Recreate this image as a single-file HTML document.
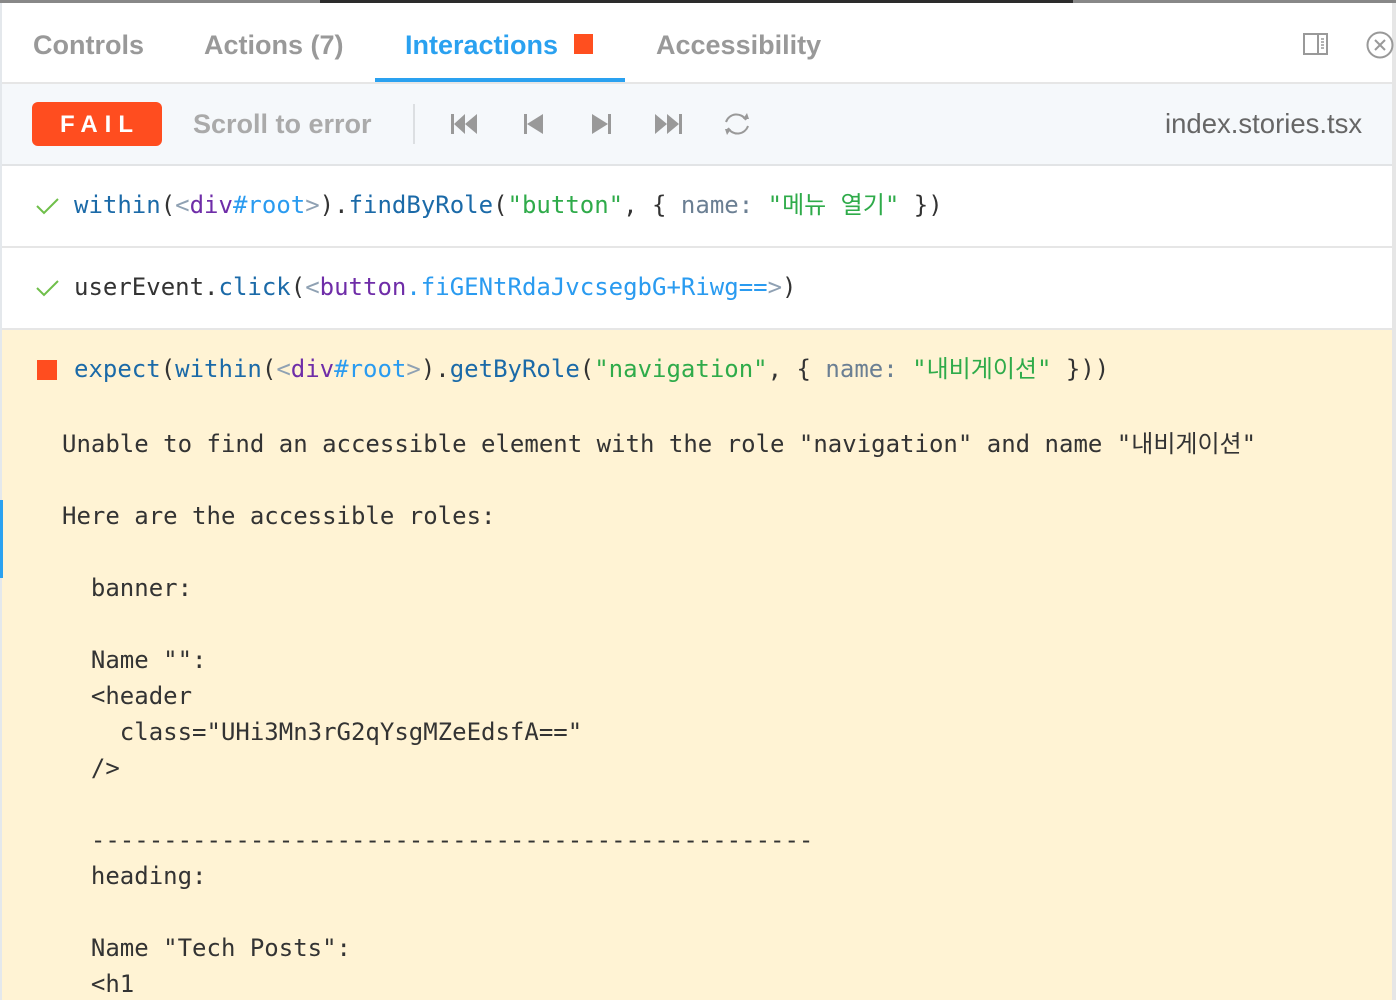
<!DOCTYPE html>
<html><head><meta charset="utf-8"><style>
*{margin:0;padding:0;box-sizing:border-box}
body{width:1396px;height:1000px;overflow:hidden;background:#fff;font-family:"Liberation Sans","Noto Sans CJK KR",sans-serif;position:relative}
.abs{position:absolute}
.mono{font-family:"DejaVu Sans Mono","Liberation Mono","Noto Sans CJK KR",monospace;font-size:24px;white-space:pre;color:#333}
.tab{position:absolute;top:28px;font-size:27px;font-weight:bold;color:#999;line-height:34px}
.b{color:#1b6aa8}.g{color:#8fa1b3}.p{color:#6f2da8}.l{color:#2a9bf0}.s{color:#2fab4a}.k{color:#6b7f93}
</style></head><body>
<div class="abs" style="left:0;top:0;width:320px;height:3px;background:#888"></div>
<div class="abs" style="left:320px;top:0;width:753px;height:3px;background:#2c2c2c"></div>
<div class="abs" style="left:1073px;top:0;width:323px;height:3px;background:#888"></div>
<div class="abs" style="left:0;top:3px;width:2px;height:997px;background:#e4e8ec"></div>
<div class="abs" style="left:1392px;top:3px;width:4px;height:997px;background:#e6e6e6"></div>

<div class="tab" style="left:33px">Controls</div>
<div class="tab" style="left:204px">Actions (7)</div>
<div class="tab" style="left:405px;color:#2aa1f0">Interactions</div>
<div class="abs" style="left:574px;top:34px;width:19px;height:20px;background:#ff4f1f"></div>
<div class="tab" style="left:656px">Accessibility</div>
<div class="abs" style="left:375px;top:78px;width:250px;height:5px;background:#2aa1f0"></div>
<svg class="abs" style="left:1303px;top:33px" width="26" height="22"><rect x="1" y="1" width="23" height="20" fill="none" stroke="#999" stroke-width="2"/><line x1="15" y1="1" x2="15" y2="21" stroke="#999" stroke-width="2"/><path d="M18 6h3M18 9h3M18 12h3M18 15h3" stroke="#999" stroke-width="1.5"/></svg>
<svg class="abs" style="left:1365px;top:30px" width="30" height="30"><circle cx="15" cy="15" r="12.5" fill="none" stroke="#999" stroke-width="2"/><path d="M10 10l10 10M20 10l-10 10" stroke="#999" stroke-width="2"/></svg>
<div class="abs" style="left:2px;top:82px;width:1390px;height:2px;background:#e6e6e6"></div>

<div class="abs" style="left:2px;top:84px;width:1390px;height:80px;background:#f5f8fb"></div>
<div class="abs" style="left:2px;top:164px;width:1390px;height:2px;background:#e2e4e6"></div>
<div class="abs" style="left:32px;top:102px;width:130px;height:44px;background:#ff4d1f;border-radius:6px;color:#fff;font-weight:bold;font-size:24px;letter-spacing:7px;text-align:center;line-height:46px;padding-left:6px">FAIL</div>
<div class="abs" style="left:193px;top:107px;font-size:27px;font-weight:bold;color:#aaa;line-height:34px">Scroll to error</div>
<div class="abs" style="left:413px;top:104px;width:2px;height:40px;background:#dcdfe2"></div>
<svg class="abs" style="left:450px;top:112px" width="320" height="26" fill="#999">
<rect x="1" y="2" width="3" height="20"/><path d="M4 12l11-10v20zM15 12l12-10v20z"/>
<rect x="74" y="2" width="3" height="20"/><path d="M77 12l16-10v20z"/>
<path d="M142 2l16 10-16 10z"/><rect x="158" y="2" width="3" height="20"/>
<path d="M205 2l12 10-12 10zM217 2l12 10-12 10z"/><rect x="229" y="2" width="3" height="20"/>
<g fill="none" stroke="#999" stroke-width="2"><path d="M276 10a11 11 0 0 1 20-2M298 14a11 11 0 0 1-20 2"/></g>
<path d="M293 7l6 0-2 -6zM281 17l-6 0 2 6z"/>
</svg>
<div class="abs" style="left:1165px;top:107px;font-size:27.5px;color:#666;line-height:34px">index.stories.tsx</div>

<svg class="abs" style="left:36px;top:197px" width="24" height="18"><path d="M1 9l7 7L22 2" fill="none" stroke="#6fbf4a" stroke-width="2"/></svg>
<div class="abs mono" style="left:74px;top:188px;line-height:34px"><span class="b">within</span>(<span class="g">&lt;</span><span class="p">div</span><span class="l">#root</span><span class="g">&gt;</span>).<span class="b">findByRole</span>(<span class="s">"button"</span>, { <span class="k">name:</span> <span class="s">"메뉴 열기"</span> })</div>
<div class="abs" style="left:2px;top:246px;width:1390px;height:2px;background:#e6e6e6"></div>
<svg class="abs" style="left:36px;top:279px" width="24" height="18"><path d="M1 9l7 7L22 2" fill="none" stroke="#6fbf4a" stroke-width="2"/></svg>
<div class="abs mono" style="left:74px;top:270px;line-height:34px">userEvent.<span class="b">click</span>(<span class="g">&lt;</span><span class="p">button</span><span class="l">.fiGENtRdaJvcsegbG+Riwg==</span><span class="g">&gt;</span>)</div>
<div class="abs" style="left:2px;top:328px;width:1390px;height:2px;background:#e6e6e6"></div>

<div class="abs" style="left:2px;top:330px;width:1390px;height:670px;background:#fff3d4"></div>
<div class="abs" style="left:0;top:500px;width:3px;height:78px;background:#2aa1f0"></div>
<div class="abs" style="left:37px;top:360px;width:20px;height:20px;background:#ff4d1f"></div>
<div class="abs mono" style="left:74px;top:352px;line-height:34px"><span class="b">expect</span>(<span class="b">within</span>(<span class="g">&lt;</span><span class="p">div</span><span class="l">#root</span><span class="g">&gt;</span>).<span class="b">getByRole</span>(<span class="s">"navigation"</span>, { <span class="k">name:</span> <span class="s">"내비게이션"</span> }))</div>
<div class="abs mono" style="left:62px;top:426px;line-height:36px">Unable to find an accessible element with the role "navigation" and name "내비게이션"

Here are the accessible roles:

  banner:

  Name "":
  &lt;header
    class="UHi3Mn3rG2qYsgMZeEdsfA=="
  /&gt;

  --------------------------------------------------
  heading:

  Name "Tech Posts":
  &lt;h1</div>
</body></html>
